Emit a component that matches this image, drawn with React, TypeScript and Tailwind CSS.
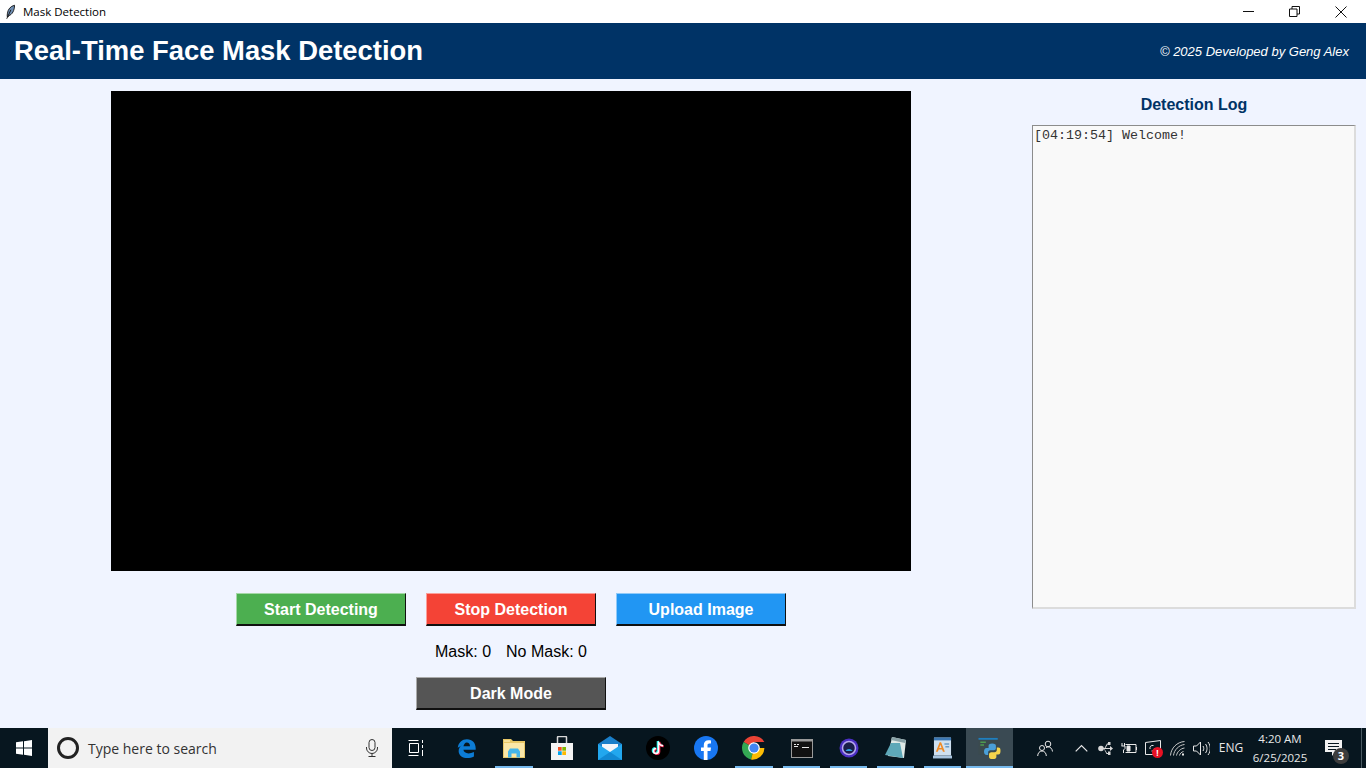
const sans = "font-['Liberation_Sans',Arial,sans-serif]"
const ui = "font-['Open_Sans','Noto_Sans',sans-serif]"

function TkButton({ label, className }: { label: string; className: string }) {
  return (
    <button
      className={`h-[33px] border border-b-2 border-b-[#101010] border-r-[#101010] pt-[1px] text-[16px] font-bold text-white ${className}`}
    >
      {label}
    </button>
  )
}

function TitleBar() {
  return (
    <div className="flex h-[23px] items-center bg-white">
      <svg className="ml-[6px] h-[16px] w-[9px]" viewBox="0 0 10 16">
        <path d="M9.500 .5C5 1.500 2 5 1.500 10L1.300 13l1 .5.8-1.500C7 11 9.500 6 9.500 .5z" fill="#6f8fb5" stroke="#111" strokeWidth="1" />
        <path d="M.8 15.500 5.500 5.500" stroke="#111" strokeWidth="1" />
      </svg>
      <span className={`ml-[8px] text-[11.5px] text-black ${ui}`}>Mask Detection</span>
      <div className="ml-auto flex h-full items-center">
        <svg className="mr-[35px] h-[11px] w-[11px]" viewBox="0 0 11 11" stroke="#111" fill="none">
          <path d="M0 5.500h11" />
        </svg>
        <svg className="mr-[35px] h-[11px] w-[11px]" viewBox="0 0 11 11" fill="none" stroke="#111">
          <path d="M.5 3H8v7.500H.5z" />
          <path d="M3 3V.5h7.500V8H8" />
        </svg>
        <svg className="mr-[19px] h-[12px] w-[12px]" viewBox="0 0 12 12" fill="none" stroke="#111">
          <path d="M.5 .5l11 11M11.500 .5l-11 11" />
        </svg>
      </div>
    </div>
  )
}

function Header() {
  return (
    <div className={`flex h-[56px] items-center justify-between bg-[#003366] pl-[14px] pr-[17px] text-white ${sans}`}>
      <h1 className="text-[27.4px] font-bold">Real-Time Face Mask Detection</h1>
      <span className="pt-[1px] text-[13px] italic">© 2025 Developed by Geng Alex</span>
    </div>
  )
}

function Main() {
  return (
    <div className={`flex h-[649px] bg-[#f0f4ff] ${sans}`}>
      <div className="flex w-[1022px] flex-col items-center pt-[12px]">
        <div className="h-[480px] w-[800px] bg-black" />
        <div className="mt-[22px] flex gap-[20px]">
          <TkButton label="Start Detecting" className="w-[170px] border-l-[#a5d8a7] border-t-[#a5d8a7] bg-[#4caf50]" />
          <TkButton label="Stop Detection" className="w-[170px] border-l-[#fb9f9a] border-t-[#fb9f9a] bg-[#f44336]" />
          <TkButton label="Upload Image" className="w-[170px] border-l-[#90caf9] border-t-[#90caf9] bg-[#2196f3]" />
        </div>
        <div className="mt-[16px] flex h-[19px] gap-[15px] text-[16px] leading-[19px] text-black">
          <span>Mask: 0</span>
          <span>No Mask: 0</span>
        </div>
        <TkButton label="Dark Mode" className="mt-[16px] w-[190px] border-l-[#aaaaaa] border-t-[#aaaaaa] bg-[#555555]" />
      </div>
      <div className="ml-[10px] flex w-[324px] flex-col">
        <h2 className="mt-[16px] text-center text-[16px] font-bold leading-[20px] text-[#003366]">Detection Log</h2>
        <div className="mt-[10px] h-[484px] border border-b-2 border-r-2 border-b-[#dcdcdc] border-l-[#8c8c8c] border-r-[#dcdcdc] border-t-[#8c8c8c] bg-[#f9f9f9] py-[2px] pl-[1px]">
          <p className="font-['Liberation_Mono',monospace] text-[13.33px] leading-[15px] text-[#333]">[04:19:54] Welcome!</p>
        </div>
      </div>
    </div>
  )
}

function WindowsLogo() {
  return (
    <svg className="h-[16px] w-[16px]" viewBox="0 0 16 16" fill="#fff">
      <path d="M0 2.300 7 1.300V7.600H0zM8 1.150 16 0V7.600H8zM0 8.400H7V14.700L0 13.700zM8 8.400H16V16L8 14.850z" />
    </svg>
  )
}

function TaskIcon({
  children,
  open,
  active,
  narrow,
}: {
  children: React.ReactNode
  open?: boolean
  active?: boolean
  narrow?: boolean
}) {
  return (
    <div
      className={`relative flex h-[40px] items-center justify-center ${narrow ? "w-[47px]" : "w-[48px]"} ${active ? "bg-[#3a4a53]" : ""}`}
    >
      {children}
      {open && (
        <div className={`absolute bottom-0 h-[2px] bg-[#76b9ed] ${active ? "left-0 right-0" : "left-[5px] right-[5px]"}`} />
      )}
    </div>
  )
}

function TrayCell({ children }: { children: React.ReactNode }) {
  return <div className="flex h-full w-[24px] items-center justify-center">{children}</div>
}

function Tray() {
  return (
    <div className="ml-auto flex h-full w-[333px] items-center text-[#e8e8e8]">
      <TrayCell>
        <svg className="h-[17px] w-[16px]" viewBox="0 0 16 17" fill="none" stroke="#e8e8e8">
          <circle cx="11" cy="4" r="2.800" />
          <circle cx="5" cy="8" r="2.500" />
          <path d="M.7 16c0-2.800 1.800-5 4.300-5s4.300 2.200 4.300 5M9 8c.5-.8 1.200-1.200 2-1.200 2.500 0 4.200 2 4.500 4.700" />
        </svg>
      </TrayCell>
      <div className="w-[12px]" />
      <TrayCell>
        <svg className="h-[8px] w-[13px]" viewBox="0 0 13 8" fill="none" stroke="#e8e8e8" strokeWidth="1.200">
          <path d="M.7 7.300 6.500 1.500l5.800 5.800" />
        </svg>
      </TrayCell>
      <TrayCell>
        <svg className="h-[15px] w-[15px]" viewBox="0 0 15 15" fill="#d8d8d8">
          <circle cx="3" cy="7.500" r="2.800" />
          <path d="M3 7h9V5l3 2.500L12 10V8H3zM6.500 7 9 2.500h2.500v1H9.600L7.500 7zM6.500 8 9 12h1v-1.500h2.500V14H10v-1H8.500L6 8z" />
          <path d="M10 1h2.500v3H10z" />
        </svg>
      </TrayCell>
      <TrayCell>
        <svg className="h-[12px] w-[16px]" viewBox="0 0 16 12" fill="none" stroke="#e8e8e8">
          <path d="M4.500 2.500h10.500v8H4.500" />
          <path d="M15.500 5v3" />
          <path d="M6 4h3v5H6z" fill="#e8e8e8" />
          <path d="M1 1v3M3.500 1v3M.5 4h3.500v2.500L2.500 8v3" />
        </svg>
      </TrayCell>
      <TrayCell>
        <div className="relative h-[16px] w-[16px]">
          <svg className="h-[16px] w-[16px]" viewBox="0 0 16 16" fill="none" stroke="#e8e8e8">
            <path d="M.5 2.500 15.500 .5v14H.5z" />
            <path d="M5 9c-.5-2.500 1-4 3.500-3.500M9.500 8c.5 2-1 3-3 3" />
          </svg>
          <div className="absolute bottom-[-2px] right-[-2px] flex h-[11px] w-[11px] items-center justify-center rounded-full bg-[#e81123] text-[8px] font-bold leading-none text-white">
            !
          </div>
        </div>
      </TrayCell>
      <TrayCell>
        <svg className="h-[15px] w-[15px]" viewBox="0 0 15 15" fill="none" stroke="#c8c8c8">
          <path d="M.5 14.500C1 7 7 1 14.500 .5M3.500 14.500C4 9 9 4 14.500 3.500M6.500 14.500C7 11 10.500 7.500 14.500 7M9.500 14.500c.3-2 2-3.500 4-4" />
          <path d="M12 12.500h2v2h-2z" fill="#e8e8e8" stroke="none" />
        </svg>
      </TrayCell>
      <TrayCell>
        <svg className="h-[15px] w-[17px]" viewBox="0 0 17 15" fill="none" stroke="#e8e8e8">
          <path d="M.5 5v5h3l4 4V1l-4 4zM10 5c1 1.500 1 3.500 0 5M12.500 3c2 2.500 2 6.500 0 9M15 1c3 4 3 9 0 13" />
        </svg>
      </TrayCell>
      <div className="flex h-full w-[36px] items-center justify-center text-[12px]">ENG</div>
      <div className="flex h-full w-[62px] flex-col items-center justify-center text-[11.5px] leading-[19px]">
        <span>4:20 AM</span>
        <span>6/25/2025</span>
      </div>
      <div className="relative h-full w-[51px] border-r border-r-[#4a5a62]">
        <svg className="absolute left-[14px] top-[12px] h-[16px] w-[17px]" viewBox="0 0 17 16" fill="#f2f2f2">
          <path d="M0 0h17v12H10l-3 4v-4H0zM3 3v1h11V3zM3 6v1h11V6zM3 9v1h8V9z" fillRule="evenodd" />
        </svg>
        <div className="absolute left-[22px] top-[20px] flex h-[16px] w-[16px] items-center justify-center rounded-full bg-[#3c3c3c] text-[11px] font-bold text-white">
          3
        </div>
      </div>
    </div>
  )
}

function Taskbar() {
  return (
    <div className={`flex h-[40px] items-center bg-[#07161f] text-white ${ui}`}>
      <div className="flex h-full w-[48px] items-center justify-center">
        <WindowsLogo />
      </div>
      <div className="flex h-full w-[344px] items-center bg-[#f2f2f2] pl-[9px] text-[#333]">
        <div className="h-[22px] w-[22px] rounded-full border-[3px] border-[#222]" />
        <span className="ml-[9px] text-[14px]">Type here to search</span>
        <svg className="ml-auto mr-[14px] h-[18px] w-[12px]" viewBox="0 0 12 18" fill="none" stroke="#333">
          <rect x="3" y=".5" width="6" height="11" rx="3" />
          <path d="M.5 8v1a5.500 5.500 0 0 0 11 0V8M6 14.500v3M2.500 17.500h7" />
        </svg>
      </div>
      <TaskIcon>
        <svg className="h-[16px] w-[16px]" viewBox="0 0 16 16" fill="none" stroke="#fff">
          <path d="M.5 .5h10M.5 15.500h10M1.500 3.500h9v9h-9zM14.500 0v3M14.500 5v3M14.500 10v6" />
        </svg>
      </TaskIcon>
      <div className="w-[2px]" />
      <TaskIcon>
        <svg className="h-[21px] w-[21px]" viewBox="0 0 24 24">
          <path d="M2 11C3 5 7 1.500 12.500 1.500 19 1.500 23 6 22.500 13.500H8.500c.3 4 6 5.500 12 2.500v5c-7 3.500-17 2-17.500-6 0-3 1.500-5.500 4-7C5.500 9.500 4 10 2 11zM8.500 9.500h7.500C16 6.500 14.500 5 12.300 5 10.300 5 9 7 8.500 9.500z" fill="#0c7cd5" />
        </svg>
      </TaskIcon>
      <TaskIcon open>
        <svg className="h-[20px] w-[22px]" viewBox="0 0 22 20">
          <path d="M0 1h8l2 2h12v17H0z" fill="#e8c766" />
          <path d="M1 2h6v2H1z" fill="#f7e19a" />
          <path d="M1 5h20v14H1z" fill="#fbe7a8" />
          <path d="M5 19.500v-6l2-3h8l2 3v6h-3.500v-4h-5v4z" fill="#45b5ea" />
        </svg>
      </TaskIcon>
      <TaskIcon>
        <svg className="h-[24px] w-[24px]" viewBox="0 0 24 24">
          <path d="M1 7h22v17H1z" fill="#f4f4f4" />
          <path d="M7.500 7V1.500a1 1 0 0 1 1-1h7a1 1 0 0 1 1 1V7" fill="none" stroke="#d8d8d8" strokeWidth="1.500" />
          <path d="M8 11h3.700v3.700H8z" fill="#f25022" />
          <path d="M12.300 11H16v3.700h-3.700z" fill="#7fba00" />
          <path d="M8 15.300h3.700V19H8z" fill="#00a4ef" />
          <path d="M12.300 15.300H16V19h-3.700z" fill="#ffb900" />
        </svg>
      </TaskIcon>
      <TaskIcon>
        <svg className="h-[24px] w-[24px]" viewBox="0 0 24 24">
          <path d="M12 0 24 8v16H0V8z" fill="#1a7fc9" />
          <path d="M4 8h16v4l-8 5-8-5z" fill="#f2f6fa" />
          <path d="M0 8l12 8 12-8v16H0z" fill="#22a7ee" />
          <path d="M0 24l12-8 12 8z" fill="#1289d3" />
        </svg>
      </TaskIcon>
      <TaskIcon>
        <svg className="h-[24px] w-[24px]" viewBox="0 0 24 24" fill="none">
          <circle cx="12" cy="12" r="12" fill="#000" />
          <path d="M12.500 5.500v9.500a2.500 2.500 0 1 1-2.500-2.500M12.500 5.500c.3 2.500 2 4 4.500 4.200" stroke="#25f4ee" strokeWidth="2.200" transform="translate(-.7 -.5)" />
          <path d="M12.500 5.500v9.500a2.500 2.500 0 1 1-2.500-2.500M12.500 5.500c.3 2.500 2 4 4.500 4.200" stroke="#fe2c55" strokeWidth="2.200" transform="translate(.7 .5)" />
          <path d="M12.500 5.500v9.500a2.500 2.500 0 1 1-2.500-2.500M12.500 5.500c.3 2.500 2 4 4.500 4.200" stroke="#fff" strokeWidth="1.500" />
        </svg>
      </TaskIcon>
      <TaskIcon>
        <svg className="h-[24px] w-[24px]" viewBox="0 0 24 24">
          <circle cx="12" cy="12" r="12" fill="#1877f2" />
          <path d="M13.500 24v-9h3l.5-3.500h-3.500V9.300c0-1 .5-1.800 1.900-1.800H17V4.400C16.500 4.300 15.500 4.200 14.500 4.200c-2.800 0-4.700 1.700-4.700 4.700v2.600H7V15h2.800v9z" fill="#fff" />
        </svg>
      </TaskIcon>
      <TaskIcon open>
        <svg className="h-[24px] w-[24px]" viewBox="0 0 24 24">
          <path d="M12 12 1.600 6A12 12 0 0 1 22.400 6H12z" fill="#ea4335" />
          <path d="M12 12 1.600 6A12 12 0 0 0 9 23.600z" fill="#34a853" />
          <path d="M12 12H22.400A12 12 0 0 1 9 23.600z" fill="#fbbc05" />
          <circle cx="12" cy="12" r="5.800" fill="#fff" />
          <circle cx="12" cy="12" r="4.600" fill="#4285f4" />
        </svg>
      </TaskIcon>
      <TaskIcon open narrow>
        <svg className="h-[19px] w-[22px]" viewBox="0 0 22 19">
          <path d="M0 0h22v19H0z" fill="#9a9a9a" />
          <path d="M1 2.500h20V18H1z" fill="#111" />
          <path d="M3 5h2v1H3zM6 5h2v1H6zM3 7h4v1H3zM11 8h7v1h-7z" fill="#e8e8e8" />
        </svg>
      </TaskIcon>
      <TaskIcon open narrow>
        <svg className="h-[20px] w-[20px]" viewBox="0 0 20 20">
          <circle cx="10" cy="10" r="9.500" fill="#4b2fc4" />
          <circle cx="10" cy="10" r="6.500" fill="#1a1e4a" stroke="#b7a7f0" strokeWidth="1.500" />
          <path d="M6.500 13a4 4 0 0 1 7 0z" fill="#2fa4e7" />
        </svg>
      </TaskIcon>
      <TaskIcon open narrow>
        <svg className="h-[24px] w-[22px]" viewBox="0 0 22 24">
          <path d="M7 1 21 4 19 22 3 20z" fill="#dfe9e6" />
          <path d="M7 1 21 4 20 7 6 4z" fill="#8aa3a8" />
          <path d="M0 19 6 7h9l3 15z" fill="#5ea8b8" />
        </svg>
      </TaskIcon>
      <TaskIcon open narrow>
        <svg className="h-[22px] w-[19px]" viewBox="0 0 20 22">
          <path d="M1 0h18v19H1z" fill="#cfe0ef" />
          <path d="M1 0h18v3H1z" fill="#3c78b4" />
          <path d="M0 19h20v3H0z" fill="#a8c4de" />
          <path d="M3 15 7 5h1.500l4 10h-2l-1-2.500H6L5 15zM6.500 11h2.500L7.800 7.700z" fill="#f08a24" />
          <path d="M12 6h5v1.500h-5zM13 9h4v1.500h-4z" fill="#6b9bc8" />
        </svg>
      </TaskIcon>
      <TaskIcon open active narrow>
        <svg className="h-[22px] w-[23px]" viewBox="0 0 24 24">
          <path d="M0 1h21v18H0z" fill="#3b4a4e" />
          <path d="M0 1h21v2H0z" fill="#1f7fbf" />
          <path d="M2 5h6v1.500H2zM2 8h4v1.500H2z" fill="#4f9b4f" />
          <path d="M15 7c-3 0-4 1-4 2.500V12h-2c-2 0-3 1.500-3 4 0 2 1 3.500 3 3.500h1.500v-2.500c0-1.500 1-2.500 2.500-2.500h3.500c1.500 0 2.500-1 2.500-2.500V9.500C19 8 18 7 15 7z" fill="#4a9fd8" />
          <path d="M15.500 24c3 0 4-1 4-2.500V19h2c2 0 2.500-1.500 2.500-4s-.5-3.500-2.500-3.500H20V14c0 1.500-1 2.500-2.500 2.500H14c-1.500 0-2.500 1-2.500 2.500v2.500c0 1.500 1 2.500 4 2.500z" fill="#f5d44c" />
        </svg>
      </TaskIcon>
      <Tray />
    </div>
  )
}

export default function App() {
  return (
    <div className="h-[768px] w-[1366px] overflow-hidden">
      <TitleBar />
      <Header />
      <Main />
      <Taskbar />
    </div>
  )
}
